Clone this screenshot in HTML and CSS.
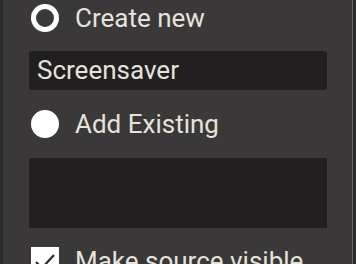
FILE: index.html
```
<!DOCTYPE html>
<html lang="en">
<head>
    <meta charset="UTF-8">
    <title>Add Source</title>
    <link rel="stylesheet" href="styles.css">
</head>
<body>
    <div class="panel">
        <label class="option">
            <span class="radio"></span>
            <span class="label">Create new</span>
        </label>
        <div class="field">Screensaver</div>

        <label class="option">
            <span class="radio checked"></span>
            <span class="label">Add Existing</span>
        </label>
        <div class="list"></div>

        <label class="option check-row">
            <span class="checkbox">
                <svg width="28" height="28" viewBox="0 0 28 28">
                    <path d="M5 15 L11 21 L23 8" fill="none" stroke="#2a2828" stroke-width="2.2"/>
                </svg>
            </span>
            <span class="label">Make source visible</span>
        </label>
    </div>
</body>
</html>
```

FILE: styles.css
```
body {
    margin: 0;
    background-color: #2b2a2a;
    font-family: Roboto, "Open Sans", sans-serif;
    overflow: hidden;
}

.panel {
    width: 350px;
    height: 264px;
    margin-left: 3px;
    background-color: #3a3838;
    border-right: 1px solid #6a6868;
    box-sizing: border-box;
    padding: 4px 0 0 26px;
}

.option {
    display: flex;
    align-items: center;
    height: 28px;
    gap: 16px;
}

.radio {
    width: 28px;
    height: 28px;
    border-radius: 50%;
    box-sizing: border-box;
    border: 5px solid #fff;
    background-color: #3a3838;
    margin-left: 2px;
}

.radio.checked {
    background-color: #fff;
}

.label {
    color: #e6e2dc;
    font-size: 26px;
}

.field {
    width: 298px;
    height: 39px;
    margin: 19px 0 20px;
    background-color: #211f1f;
    border-radius: 3px;
    box-sizing: border-box;
    padding-left: 8px;
    color: #e6e2dc;
    font-size: 26px;
    line-height: 39px;
}

.list {
    width: 298px;
    height: 70px;
    margin: 20px 0 19px;
    background-color: #211f1f;
}

.checkbox {
    width: 28px;
    height: 28px;
    background-color: #fff;
    margin-left: 2px;
}

.checkbox svg {
    display: block;
}
```
